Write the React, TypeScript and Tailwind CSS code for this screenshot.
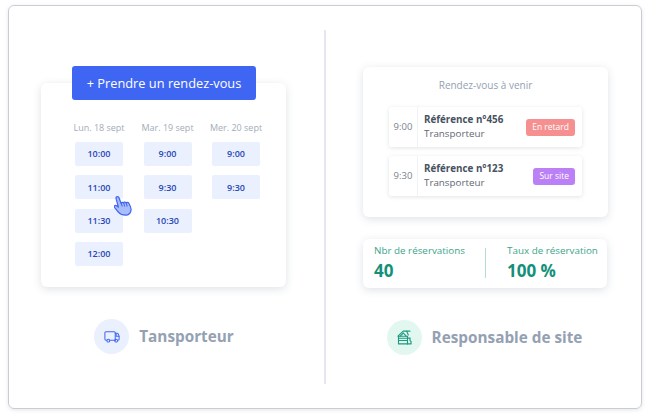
const font = { fontFamily: '"Open Sans", sans-serif' };

const days = [
  { label: "Lun. 18 sept", slots: ["10:00", "11:00", "11:30", "12:00"] },
  { label: "Mar. 19 sept", slots: ["9:00", "9:30", "10:30"] },
  { label: "Mer. 20 sept", slots: ["9:00", "9:30"] },
];

const upcoming = [
  { time: "9:00", ref: "Référence n°456", status: "En retard", color: "bg-[#f68f8f]" },
  { time: "9:30", ref: "Référence n°123", status: "Sur site", color: "bg-[#bb80f5]" },
];

function TruckIcon() {
  return (
    <svg width="16" height="12" viewBox="0 0 17 13" fill="none" stroke="#3f66f2" strokeWidth="1.1" strokeLinejoin="round" strokeLinecap="round">
      <path d="M2.8 10H2A1.2 1.2 0 0 1 .8 8.800V2A1.2 1.2 0 0 1 2 .8h9a1 1 0 0 1 1 1V10H6.200" />
      <path d="M12 2.400h2.200a1 1 0 0 1 .9.6l1.100 2.600v3.400a1 1 0 0 1-1 1h-.4M12 10h-.4" />
      <path d="M13 3v2.800h3" />
      <circle cx="4.500" cy="10.500" r="1.500" />
      <circle cx="13" cy="10.500" r="1.500" />
    </svg>
  );
}

function SiteIcon() {
  return (
    <svg width="15" height="15" viewBox="0 0 16 16" fill="none" stroke="#1f9a80" strokeWidth="1.200" strokeLinejoin="round" strokeLinecap="round">
      <path d="M1 6.600 6.600 1.200h7.200" />
      <path d="M3.400 6.600 6.800 3.200l3 3.400M10.400 1.200l1.600 4.200" />
      <path d="M1.600 6.600h9.600v2.200H1.600zM1.600 8.800h9.600v2.400H1.600zM1.600 11.200h9.600v3.600H1.600z" />
      <path d="M11.200 14.800h3.800v-2.400l-1.200-1.400.2-2.400h-2" />
    </svg>
  );
}

function HandCursor() {
  return (
    <svg className="absolute left-[105px] top-[189px]" width="21" height="22" viewBox="0 0 22 23">
      <path
        d="M2.400 2.200c.8-1 2.200-.6 2.700.5l2.400 6.100c.2-1.300 1.900-1.500 2.600-.5.3-1 2-1.200 2.700-.1.5-.8 2-.8 2.600.2.9 1.600 2.400 4.300 2.500 6.600.1 3.400-2.300 6.100-5.800 6.100-3 0-5.500-.8-7.300-2.900-1-1.200-2.500-3.100-4.200-5-.8-1-.2-2.300 1-2.300 1 0 2.100.9 3 1.800L2.300 4.300c-.2-.8-.3-1.500.1-2.100Z"
        fill="#a9bcfb"
        stroke="#3f66f2"
        strokeWidth="1.300"
        strokeLinejoin="round"
      />
      <path d="M7.500 8.800l1 2.800M10.100 8.300l1 3.300M12.800 8.200l.9 3.400" fill="none" stroke="#3f66f2" strokeWidth="1.100" strokeLinecap="round" />
    </svg>
  );
}

function Role({ label, tint, children }: { label: string; tint: string; children: React.ReactNode }) {
  return (
    <div className="flex items-center justify-center gap-[10px]">
      <div className={`flex h-[35px] w-[35px] items-center justify-center rounded-full ${tint}`}>{children}</div>
      <span className="text-[15.300px] font-bold leading-[35px] text-[#94a1b2]">{label}</span>
    </div>
  );
}

export default function App() {
  return (
    <div className="h-[420px] w-[650px] bg-white pl-2 pt-[5px]" style={font}>
      <div className="relative flex h-[404px] w-[634px] rounded-md border border-[#c9cdd3] shadow-[0_1px_4px_rgba(120,130,150,0.2)]">
        {/* Left: carrier side */}
        <div className="flex w-[315px] flex-col pt-[60px]">
          <div className="relative z-10 -mb-[17px] ml-[63px] flex h-[34px] w-[184px] items-center justify-center rounded-[3px] bg-[#3f66f2] pt-[1px] text-[12.800px] text-white">
            + Prendre un rendez-vous
          </div>
          <div className="ml-[32px] flex h-[204px] w-[245px] gap-[20.500px] rounded-md bg-white pl-[34px] pt-[38px] shadow-[0_2px_8px_rgba(90,105,130,0.2)]">
            {days.map((day) => (
              <div key={day.label} className="flex w-[48px] flex-col items-center">
                <div className="mb-[7px] h-[14px] whitespace-nowrap text-[9px] leading-[14px] text-[#a3acb9]">{day.label}</div>
                <div className="flex flex-col gap-[9.300px]">
                  {day.slots.map((slot) => (
                    <div
                      key={slot}
                      className="flex h-[24px] w-[48px] items-center justify-center rounded-[2px] bg-[#eaf0fe] text-[9px] font-semibold text-[#2746b8]"
                    >
                      {slot}
                    </div>
                  ))}
                </div>
              </div>
            ))}
          </div>
          <div className="mt-[32px] pr-[5px]">
            <Role label="Tansporteur" tint="bg-[#eaf0fe]">
              <TruckIcon />
            </Role>
          </div>
        </div>

        {/* Divider */}
        <div className="mt-[24px] h-[354px] w-[2px] bg-[#e4e8ee]" />

        {/* Right: site manager side */}
        <div className="flex flex-1 flex-col pt-[61px]">
          <div className="ml-[37px] h-[150px] w-[245px] rounded-md bg-white pt-[10px] shadow-[0_2px_8px_rgba(90,105,130,0.2)]">
            <div className="mb-[13px] text-center text-[10px] font-medium leading-[17px] text-[#94a1b2]">Rendez-vous à venir</div>
            <div className="flex flex-col gap-[9px] pl-[26px]">
              {upcoming.map((item) => (
                <div key={item.ref} className="flex h-[40px] w-[193px] items-center rounded-[3px] bg-white shadow-[0_1px_4px_rgba(90,105,130,0.18)]">
                  <div className="flex h-full w-[29px] items-center justify-center border-r border-[#f0f2f5] text-[9.500px] text-[#7a828d]">{item.time}</div>
                  <div className="ml-[6px] flex-1">
                    <div className="text-[9.800px] font-bold leading-[14px] text-[#475160]">{item.ref}</div>
                    <div className="text-[9.800px] leading-[14px] text-[#5e6774]">Transporteur</div>
                  </div>
                  <div className={`mr-[7px] flex h-[17px] items-center rounded-[3px] px-[6px] text-[8.500px] font-medium text-white ${item.color}`}>{item.status}</div>
                </div>
              ))}
            </div>
          </div>
          <div className="ml-[37px] mt-[21.500px] flex h-[49px] w-[244px] items-center rounded-md bg-white shadow-[0_2px_8px_rgba(90,105,130,0.2)]">
            <div className="w-[122px] pl-[11px]">
              <div className="text-[9.850px] leading-[14px] text-[#3ea58c]">Nbr de réservations</div>
              <div className="mt-[2px] text-[17px] font-bold leading-[24px] text-[#14907a]">40</div>
            </div>
            <div className="h-[30px] w-px bg-[#b5dcd2]" />
            <div className="pl-[21px]">
              <div className="whitespace-nowrap text-[9.850px] leading-[14px] text-[#3ea58c]">Taux de réservation</div>
              <div className="mt-[2px] text-[17px] font-bold leading-[24px] text-[#14907a]">100 %</div>
            </div>
          </div>
          <div className="mt-[32px] pl-[2px]">
            <Role label="Responsable de site" tint="bg-[#e3f7f1]">
              <SiteIcon />
            </Role>
          </div>
        </div>
        <HandCursor />
      </div>
    </div>
  );
}
